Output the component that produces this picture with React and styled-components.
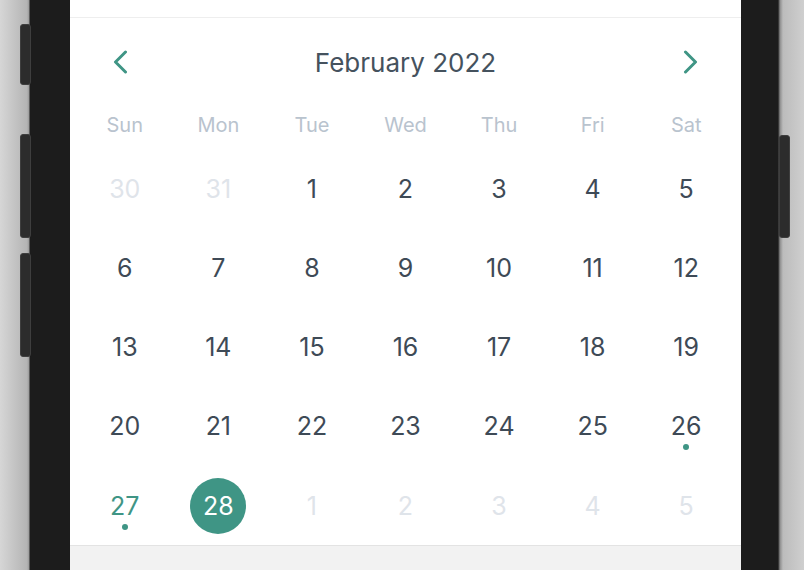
import React from 'react';
import styled, { createGlobalStyle } from 'styled-components';

const GlobalStyle = createGlobalStyle`
  html, body {
    margin: 0;
    padding: 0;
    overflow: hidden;
  }
  body {
    font-family: Inter, "Noto Sans", sans-serif;
  }
`;

const Stage = styled.div`
  position: relative;
  width: 804px;
  height: 570px;
  overflow: hidden;
  background: linear-gradient(90deg, #d6d6d6 0px, #b4b4b4 27px, #9a9a9a 29px, #1c1c1c 30px, #1c1c1c 778px, #8e8e8e 780px, #bcbcbc 783px, #cfcfcf 804px);
`;

const Phone = styled.div`
  margin-left: 30px;
  width: 750px;
  height: 570px;
  padding-left: 40px;
  box-sizing: border-box;
`;

const SideButton = styled.div`
  position: absolute;
  left: ${(p) => p.$left}px;
  top: ${(p) => p.$top}px;
  width: 11px;
  height: ${(p) => p.$height}px;
  background: #2c2c2c;
  border: 1px solid #3e3e3e;
  border-radius: 3px;
  box-sizing: border-box;
`;

const Screen = styled.div`
  width: 671px;
  height: 570px;
  background: #ffffff;
  display: flex;
  flex-direction: column;
`;

const TopBar = styled.div`
  height: 17px;
  flex-shrink: 0;
  border-bottom: 1px solid #eeeeee;
`;

const Calendar = styled.div`
  padding: 0 8px;
`;

const Header = styled.div`
  height: 88px;
  display: flex;
  align-items: center;
  justify-content: space-between;
  padding: 0 35px;
`;

const NavButton = styled.button`
  border: none;
  background: none;
  padding: 0;
  width: 15px;
  height: 24px;
  display: flex;
  cursor: pointer;
`;

const Title = styled.div`
  font-size: 26px;
  color: #45525e;
  letter-spacing: 0;
`;

const Grid = styled.div`
  display: grid;
  grid-template-columns: repeat(7, 1fr);
`;

const WeekdayRow = styled(Grid)`
  height: 38px;
  margin-bottom: 5px;
  align-items: center;
`;

const Weekday = styled.div`
  text-align: center;
  font-size: 20px;
  color: #b9c3ce;
`;

const DayCell = styled.div`
  position: relative;
  height: 79.25px;
  display: flex;
  align-items: center;
  justify-content: center;
`;

const DayNum = styled.div`
  width: 56px;
  height: 56px;
  border-radius: 50%;
  display: flex;
  align-items: center;
  justify-content: center;
  font-size: 25px;
  background: ${(p) => (p.$selected ? '#3f9585' : 'transparent')};
  color: ${(p) =>
    p.$selected ? '#ffffff' : p.$muted ? '#dfe4ea' : p.$accent ? '#3f9585' : '#3e4a56'};
`;

const Dot = styled.span`
  position: absolute;
  left: 50%;
  top: calc(50% + 18px);
  width: 6px;
  height: 6px;
  margin-left: -3px;
  border-radius: 50%;
  background: #3f9585;
`;

const Footer = styled.div`
  flex: 1;
  border-top: 1px solid #e3e3e3;
  background: #f2f2f2;
`;

const Chevron = ({ dir }) => (
  <svg width="15" height="24" viewBox="0 0 15 24" fill="none">
    <polyline
      points={dir === 'left' ? '12.5,2 2.5,12 12.5,22' : '2.5,2 12.5,12 2.5,22'}
      stroke="#3f9585"
      strokeWidth="3"
      strokeLinecap="round"
      strokeLinejoin="round"
    />
  </svg>
);

const weekdays = ['Sun', 'Mon', 'Tue', 'Wed', 'Thu', 'Fri', 'Sat'];

const days = [
  { n: 30, muted: true },
  { n: 31, muted: true },
  ...Array.from({ length: 28 }, (_, i) => ({ n: i + 1 })),
  ...[1, 2, 3, 4, 5].map((n) => ({ n, muted: true })),
];
days[27].dot = true; // 26
days[28].dot = true; // 27
days[28].accent = true;
days[29].selected = true; // 28

export default function App() {
  return (
    <Stage>
      <GlobalStyle />
      <SideButton $left={20} $top={24} $height={61} />
      <SideButton $left={20} $top={134} $height={104} />
      <SideButton $left={20} $top={253} $height={104} />
      <SideButton $left={779} $top={135} $height={103} />
      <Phone>
        <Screen>
          <TopBar />
          <Calendar>
            <Header>
              <NavButton aria-label="Previous month">
                <Chevron dir="left" />
              </NavButton>
              <Title>February 2022</Title>
              <NavButton aria-label="Next month">
                <Chevron dir="right" />
              </NavButton>
            </Header>
            <WeekdayRow>
              {weekdays.map((d) => (
                <Weekday key={d}>{d}</Weekday>
              ))}
            </WeekdayRow>
            <Grid>
              {days.map((d, i) => (
                <DayCell key={i}>
                  <DayNum $muted={d.muted} $accent={d.accent} $selected={d.selected}>
                    {d.n}
                  </DayNum>
                  {d.dot && <Dot />}
                </DayCell>
              ))}
            </Grid>
          </Calendar>
          <Footer />
        </Screen>
      </Phone>
    </Stage>
  );
}
